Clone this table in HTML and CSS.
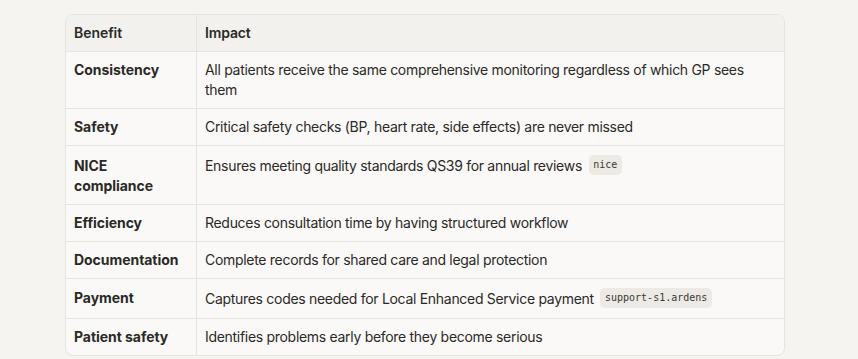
FILE: index.html
```html
<!DOCTYPE html>
<html lang="en">
<head>
<meta charset="utf-8">
<link rel="stylesheet" href="styles.css">
</head>
<body>
<div class="wrap">
<table class="tbl">
<thead>
<tr><th class="c1">Benefit</th><th>Impact</th></tr>
</thead>
<tbody>
<tr><td class="c1">Consistency</td><td>All patients receive the same comprehensive monitoring regardless of which GP sees them</td></tr>
<tr><td class="c1">Safety</td><td>Critical safety checks (BP, heart rate, side effects) are never missed</td></tr>
<tr><td class="c1">NICE compliance</td><td>Ensures meeting quality standards QS39 for annual reviews <code class="tag">nice</code></td></tr>
<tr><td class="c1">Efficiency</td><td>Reduces consultation time by having structured workflow</td></tr>
<tr><td class="c1">Documentation</td><td>Complete records for shared care and legal protection</td></tr>
<tr><td class="c1">Payment</td><td>Captures codes needed for Local Enhanced Service payment <code class="tag">support-s1.ardens</code></td></tr>
<tr><td class="c1">Patient safety</td><td>Identifies problems early before they become serious</td></tr>
</tbody>
</table>
</div>
</body>
</html>
```
FILE: styles.css
```css
html, body { margin: 0; padding: 0; }
body {
  background: #f5f4f0;
  font-family: Inter, "Noto Sans", sans-serif;
  color: #2a2926;
}
.wrap {
  padding: 14px 0 0 65px;
}
.tbl {
  width: 720px;
  table-layout: fixed;
  border-collapse: separate;
  border-spacing: 0;
  background: #faf9f7;
  border: 1px solid #e6e4df;
  border-radius: 8px;
  overflow: hidden;
  font-size: 14px;
  line-height: 20px;
  letter-spacing: -0.3px;
}
.tbl th, .tbl td {
  text-align: left;
  vertical-align: baseline;
  padding: 8px 8px 8px 8px;
  border-bottom: 1px solid #e6e4df;
}
.tbl tr:last-child td { border-bottom: none; }
.tbl th { background: #f2f1ee; font-weight: 600; letter-spacing: -0.15px; }
.tbl th.c1, .tbl td.c1 {
  width: 114px;
  border-right: 1px solid #e6e4df;
  font-weight: 700;
  letter-spacing: -0.05px;
}
.tbl th.c1 { font-weight: 600; }
.tag {
  display: inline-block;
  font-family: "DejaVu Sans Mono", monospace;
  font-size: 10px;
  line-height: 20px;
  letter-spacing: 0;
  background: #edeae5;
  border-radius: 5px;
  padding: 0 4.5px;
  margin: 1px 0 2px 3px;
  vertical-align: 2.5px;
  color: #3a3935;
}
```
